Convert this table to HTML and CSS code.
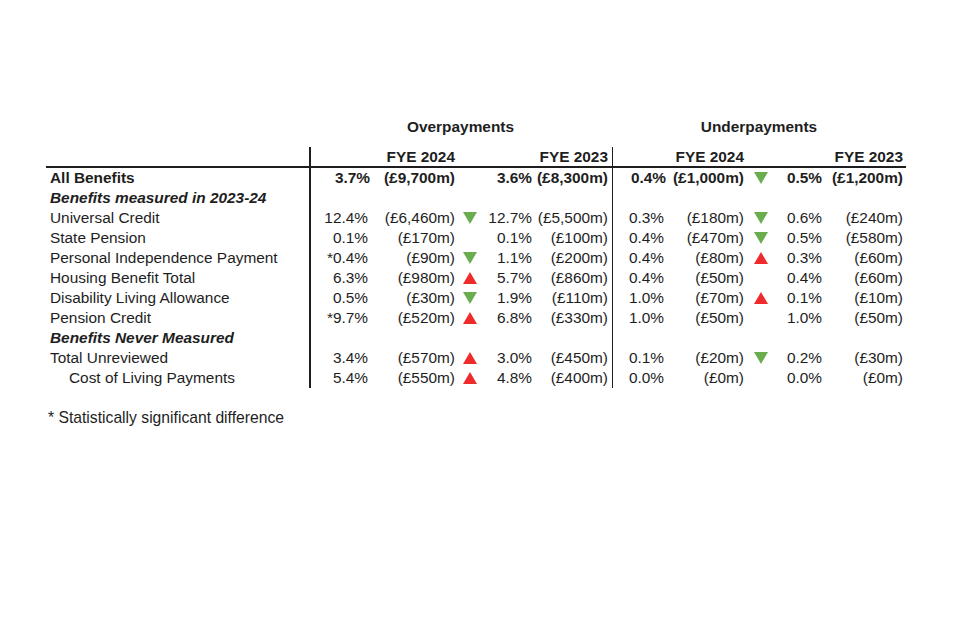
FILE: index.html
```html
<!DOCTYPE html>
<html lang="en">
<head>
<meta charset="utf-8">
<title>Fraud and error estimates</title>
<link rel="stylesheet" href="styles.css">
</head>
<body>
<div class="page">
  <div class="table">
    <div class="row groups">
      <div class="c-label"></div>
      <div class="hd-over">Overpayments</div>
      <div class="hd-under">Underpayments</div>
    </div>

    <div class="row years">
      <div class="c-label"></div>
      <div class="y1 vl-thick">FYE 2024</div>
      <div class="y2">FYE 2023</div>
      <div class="y3 vl-thin">FYE 2024</div>
      <div class="y4">FYE 2023</div>
    </div>

    <div class="row bold">
      <div class="lbl">All Benefits</div>
      <div class="num vl-thick shift">3.7%</div><div class="num">(£9,700m)</div><div class="tri"></div><div class="num">3.6%</div><div class="num end">(£8,300m)</div>
      <div class="num vl-thin shift">0.4%</div><div class="num">(£1,000m)</div><div class="tri"><span class="down"></span></div><div class="num">0.5%</div><div class="num last">(£1,200m)</div>
    </div>

    <div class="row">
      <div class="lbl bi">Benefits measured in 2023-24</div>
      <div class="num vl-thick"></div><div class="num"></div><div class="tri"></div><div class="num"></div><div class="num end"></div>
      <div class="num vl-thin"></div><div class="num"></div><div class="tri"></div><div class="num"></div><div class="num last"></div>
    </div>

    <div class="row">
      <div class="lbl">Universal Credit</div>
      <div class="num vl-thick">12.4%</div><div class="num">(£6,460m)</div><div class="tri"><span class="down"></span></div><div class="num">12.7%</div><div class="num end">(£5,500m)</div>
      <div class="num vl-thin">0.3%</div><div class="num">(£180m)</div><div class="tri"><span class="down"></span></div><div class="num">0.6%</div><div class="num last">(£240m)</div>
    </div>

    <div class="row">
      <div class="lbl">State Pension</div>
      <div class="num vl-thick">0.1%</div><div class="num">(£170m)</div><div class="tri"></div><div class="num">0.1%</div><div class="num end">(£100m)</div>
      <div class="num vl-thin">0.4%</div><div class="num">(£470m)</div><div class="tri"><span class="down"></span></div><div class="num">0.5%</div><div class="num last">(£580m)</div>
    </div>

    <div class="row">
      <div class="lbl">Personal Independence Payment</div>
      <div class="num vl-thick">*0.4%</div><div class="num">(£90m)</div><div class="tri"><span class="down"></span></div><div class="num">1.1%</div><div class="num end">(£200m)</div>
      <div class="num vl-thin">0.4%</div><div class="num">(£80m)</div><div class="tri"><span class="up"></span></div><div class="num">0.3%</div><div class="num last">(£60m)</div>
    </div>

    <div class="row">
      <div class="lbl">Housing Benefit Total</div>
      <div class="num vl-thick">6.3%</div><div class="num">(£980m)</div><div class="tri"><span class="up"></span></div><div class="num">5.7%</div><div class="num end">(£860m)</div>
      <div class="num vl-thin">0.4%</div><div class="num">(£50m)</div><div class="tri"></div><div class="num">0.4%</div><div class="num last">(£60m)</div>
    </div>

    <div class="row">
      <div class="lbl">Disability Living Allowance</div>
      <div class="num vl-thick">0.5%</div><div class="num">(£30m)</div><div class="tri"><span class="down"></span></div><div class="num">1.9%</div><div class="num end">(£110m)</div>
      <div class="num vl-thin">1.0%</div><div class="num">(£70m)</div><div class="tri"><span class="up"></span></div><div class="num">0.1%</div><div class="num last">(£10m)</div>
    </div>

    <div class="row">
      <div class="lbl">Pension Credit</div>
      <div class="num vl-thick">*9.7%</div><div class="num">(£520m)</div><div class="tri"><span class="up"></span></div><div class="num">6.8%</div><div class="num end">(£330m)</div>
      <div class="num vl-thin">1.0%</div><div class="num">(£50m)</div><div class="tri"></div><div class="num">1.0%</div><div class="num last">(£50m)</div>
    </div>

    <div class="row">
      <div class="lbl bi">Benefits Never Measured</div>
      <div class="num vl-thick"></div><div class="num"></div><div class="tri"></div><div class="num"></div><div class="num end"></div>
      <div class="num vl-thin"></div><div class="num"></div><div class="tri"></div><div class="num"></div><div class="num last"></div>
    </div>

    <div class="row">
      <div class="lbl">Total Unreviewed</div>
      <div class="num vl-thick">3.4%</div><div class="num">(£570m)</div><div class="tri"><span class="up"></span></div><div class="num">3.0%</div><div class="num end">(£450m)</div>
      <div class="num vl-thin">0.1%</div><div class="num">(£20m)</div><div class="tri"><span class="down"></span></div><div class="num">0.2%</div><div class="num last">(£30m)</div>
    </div>

    <div class="row">
      <div class="lbl indent">Cost of Living Payments</div>
      <div class="num vl-thick">5.4%</div><div class="num">(£550m)</div><div class="tri"><span class="up"></span></div><div class="num">4.8%</div><div class="num end">(£400m)</div>
      <div class="num vl-thin">0.0%</div><div class="num">(£0m)</div><div class="tri"></div><div class="num">0.0%</div><div class="num last">(£0m)</div>
    </div>
  </div>
  <p class="note">* Statistically significant difference</p>
</div>
</body>
</html>
```

FILE: styles.css
```css
html, body {
  margin: 0;
  padding: 0;
  background: #ffffff;
}

.page {
  padding: 117px 0 0 46px;
  font-family: "Liberation Sans", Arial, sans-serif;
  font-size: 15.4px;
  color: #1e1e1e;
}

.table {
  width: 860px;
}

.row {
  display: grid;
  grid-template-columns: 263px 59px 87px 30px 47px 80px 52px 80px 34px 44px 84px;
  height: 20px;
  line-height: 20px;
  white-space: nowrap;
}

.groups {
  font-weight: bold;
  text-align: center;
  margin-bottom: 10px;
}

.hd-over { grid-column: 2 / 7; }
.hd-under { grid-column: 7 / 12; }

.years {
  height: 19px;
  line-height: 19px;
  border-bottom: 2px solid #1e1e1e;
  font-weight: bold;
  text-align: right;
}

.y1 { grid-column: 2 / 4; }
.y2 { grid-column: 4 / 7; padding-right: 4px; }
.y3 { grid-column: 7 / 9; }
.y4 { grid-column: 9 / 12; padding-right: 3px; }

.lbl {
  padding-left: 4px;
}

.bold { font-weight: bold; }
.bi { font-weight: bold; font-style: italic; }
.indent { padding-left: 23px; }

.num {
  text-align: right;
}

.shift { margin-right: -2px; }

.end { padding-right: 4px; }
.last { padding-right: 3px; }

.vl-thick { border-left: 2px solid #1e1e1e; }
.vl-thin { border-left: 1px solid #1e1e1e; }

.tri {
  display: flex;
  align-items: center;
  justify-content: center;
}

.down,
.up {
  display: block;
  width: 0;
  height: 0;
  border-left: 7px solid transparent;
  border-right: 7px solid transparent;
  margin-top: -1px;
}

.down { border-top: 12px solid #6aad4e; }
.up { border-bottom: 12px solid #ee2a2a; }

.note {
  margin: 20px 0 0 2px;
  line-height: 20px;
  font-size: 15.7px;
}
```
